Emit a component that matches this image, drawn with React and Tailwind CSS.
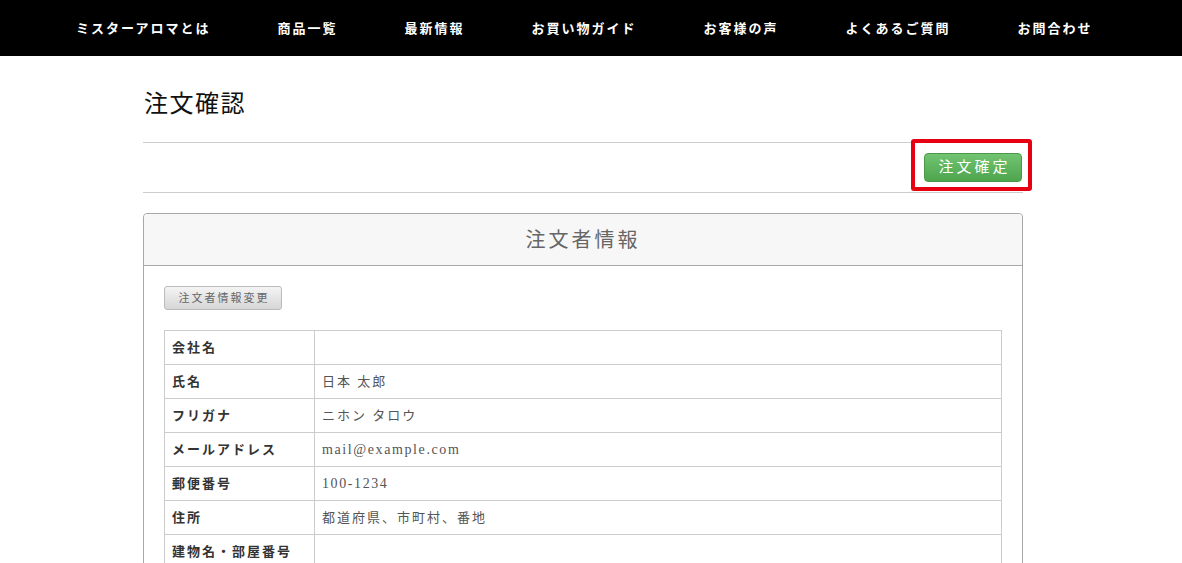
import React from "react";

const navItems = [
    "ミスターアロマとは",
    "商品一覧",
    "最新情報",
    "お買い物ガイド",
    "お客様の声",
    "よくあるご質問",
    "お問合わせ",
];

const ordererRows = [
    { label: "会社名", value: "" },
    { label: "氏名", value: "日本 太郎" },
    { label: "フリガナ", value: "ニホン タロウ" },
    { label: "メールアドレス", value: "mail@example.com" },
    { label: "郵便番号", value: "100-1234" },
    { label: "住所", value: "都道府県、市町村、番地" },
    { label: "建物名・部屋番号", value: "" },
];

const font = {
    fontFamily: '"Liberation Serif", "Noto Sans CJK JP", serif',
};

// latin-only values read a bit larger in the original
const isLatin = (text) => /^[\x00-\x7F]+$/.test(text);

function App() {
    return (
        <div className="min-h-screen bg-white" style={font}>
            <nav className="h-[56px] bg-black flex items-center pl-[76px] gap-[67px]">
                {navItems.map((item, index) => (
                    <a
                        key={index}
                        href="#"
                        className="text-white text-[13px] font-bold tracking-[2px] leading-none whitespace-nowrap"
                    >
                        {item}
                    </a>
                ))}
            </nav>

            <main className="w-[880px] ml-[143px] pt-[33px] pb-10">
                <h1 className="text-[24px] leading-[30px] tracking-[1.5px] text-[#111] pl-[1px] mb-[23px]">
                    注文確認
                </h1>

                <div className="h-[51px] border-y border-[#cccccc] flex items-center justify-end pr-[1px]">
                    <div className="relative">
                        <button className="block h-[29px] w-[98px] rounded-[4px] border border-[#4a994a] bg-gradient-to-b from-[#72c472] to-[#4da54d] text-white text-[15px] tracking-[3px] pl-[3px] leading-none">
                            注文確定
                        </button>
                        <div className="absolute left-[-13px] right-[-10px] top-[-14px] bottom-[-9px] border-[4px] border-[#e60012] rounded-[3px] pointer-events-none" />
                    </div>
                </div>

                <section className="mt-[20px] border border-[#a8a8a8] rounded-[4px]">
                    <header className="h-[52px] bg-[#f7f7f7] border-b border-[#a8a8a8] rounded-t-[4px] flex items-center justify-center">
                        <h2 className="text-[20px] tracking-[3px] text-[#666] leading-none">
                            注文者情報
                        </h2>
                    </header>
                    <div className="p-[20px]">
                        <button className="block h-[24px] w-[118px] rounded-[3px] border border-[#bbbbbb] bg-gradient-to-b from-[#f4f4f4] to-[#d6d6d6] text-[11px] tracking-[2px] pl-[2px] text-[#666] leading-none">
                            注文者情報変更
                        </button>
                        <table className="mt-[20px] w-full border-collapse">
                            <tbody>
                                {ordererRows.map((row, index) => (
                                    <tr key={index} className="h-[34px]">
                                        <th className="w-[150px] border border-[#cccccc] px-[7px] text-left text-[13px] font-bold tracking-[2px] text-[#333]">
                                            {row.label}
                                        </th>
                                        <td
                                            className={
                                                isLatin(row.value)
                                                    ? "border border-[#cccccc] px-[7px] text-[14px] tracking-[1.6px] text-[#555]"
                                                    : "border border-[#cccccc] px-[7px] text-[13px] tracking-[2px] text-[#555]"
                                            }
                                        >
                                            {row.value}
                                        </td>
                                    </tr>
                                ))}
                            </tbody>
                        </table>
                    </div>
                </section>
            </main>
        </div>
    );
}

export default App;
